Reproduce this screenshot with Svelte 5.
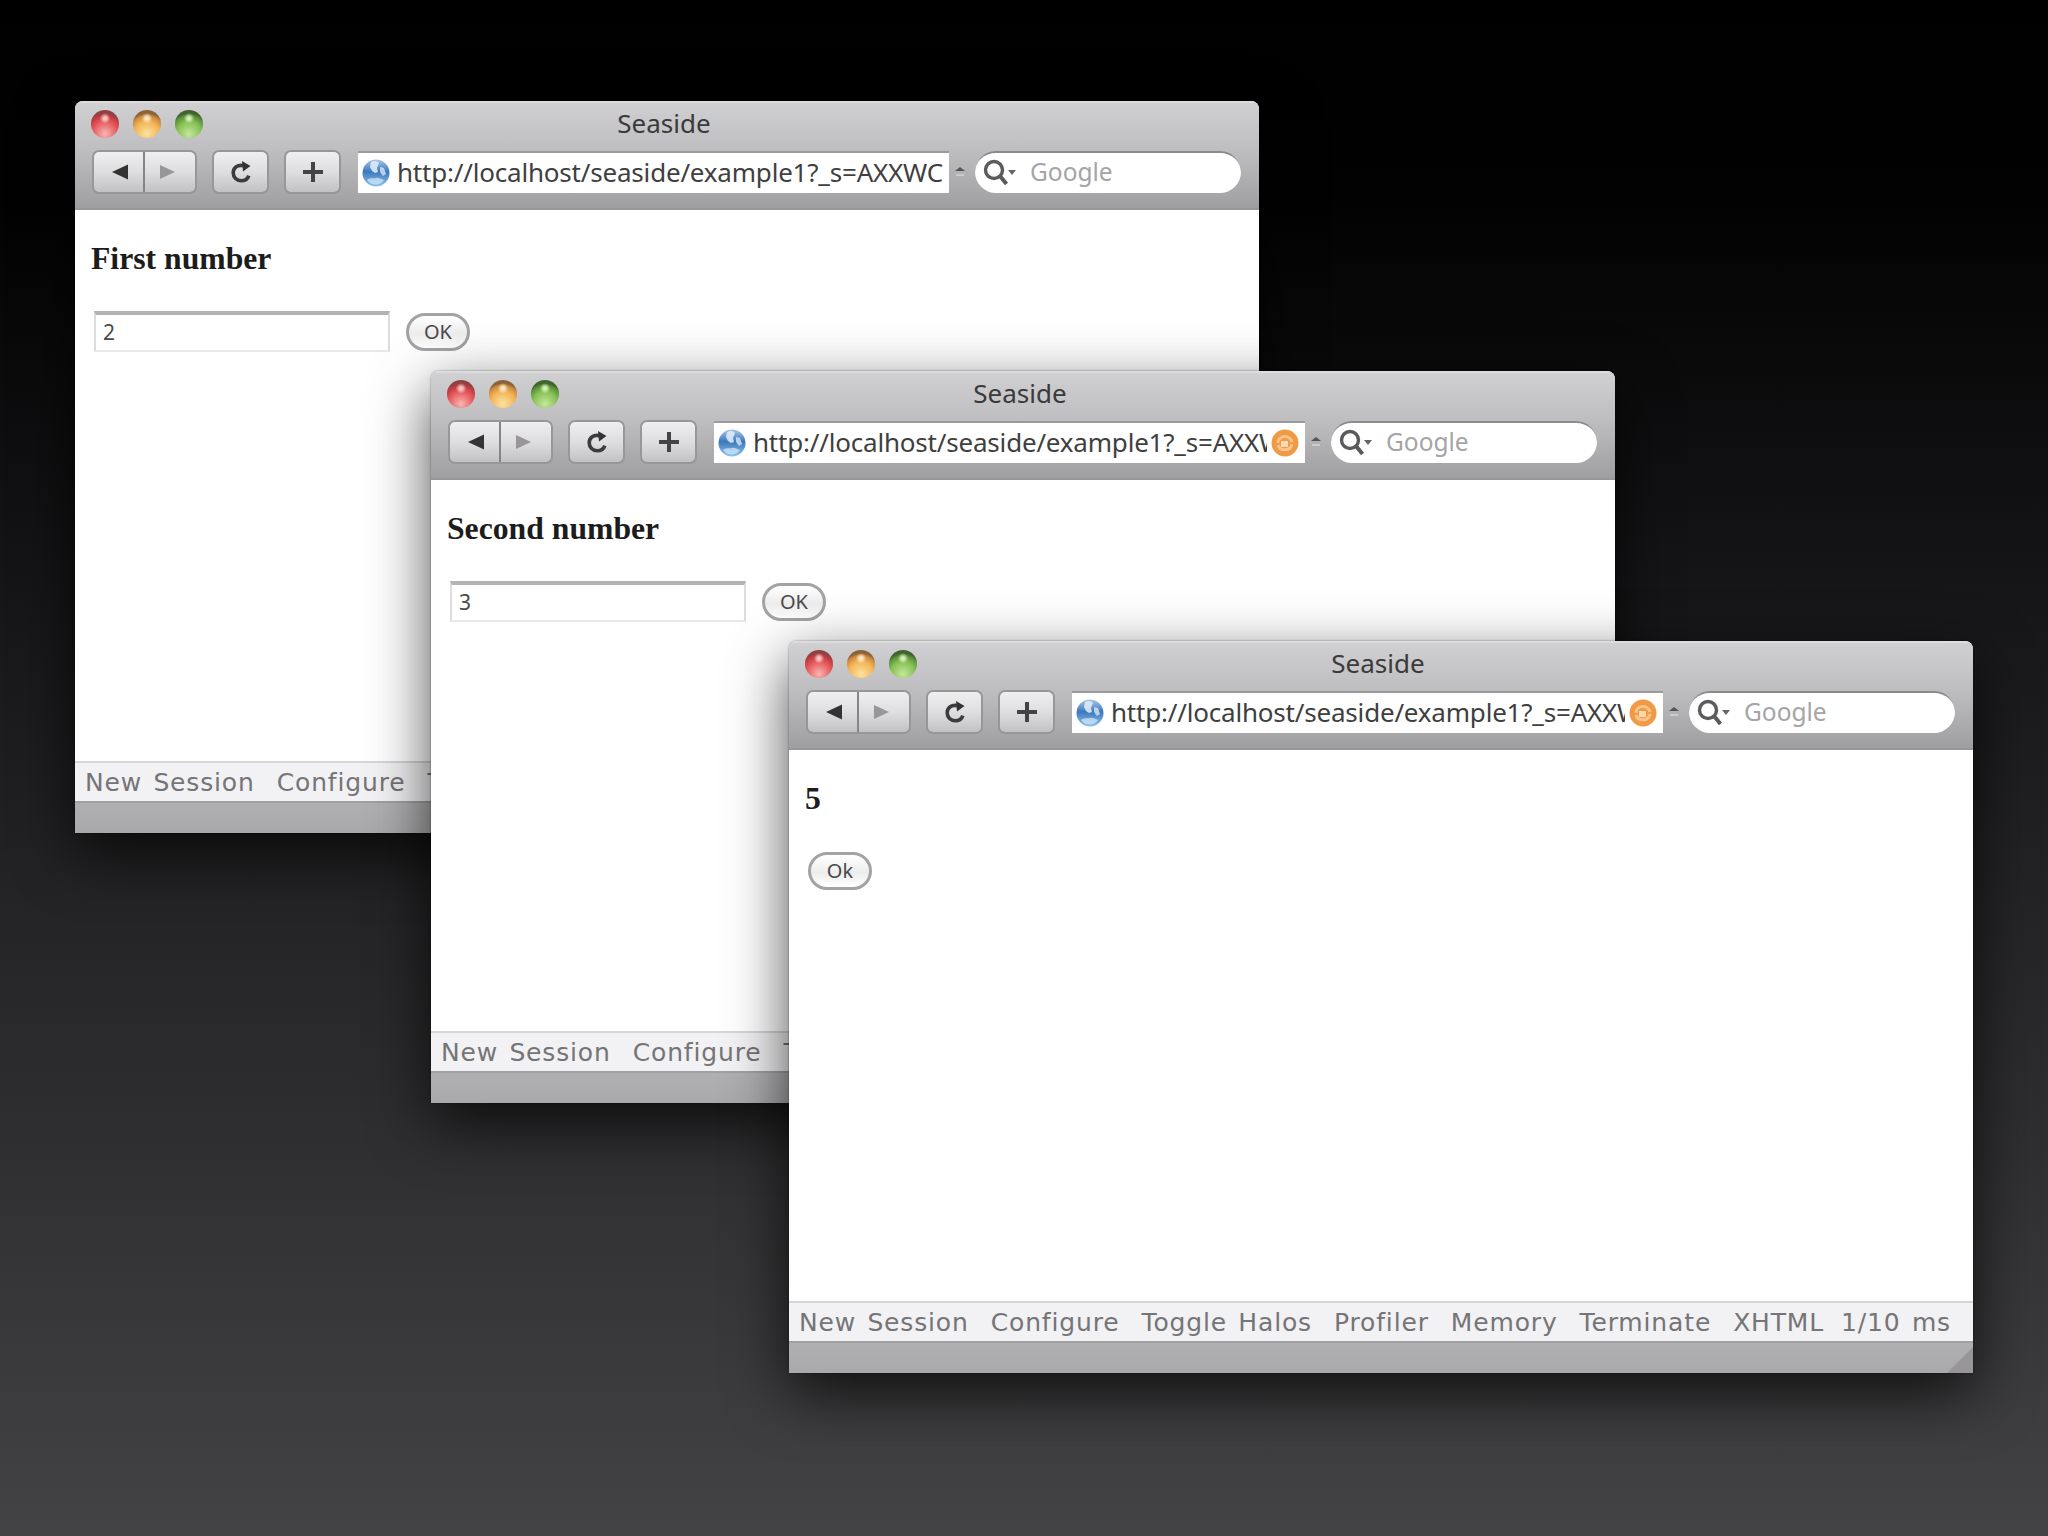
<script>
  const windows = [
    { id: 1, x: 75, y: 101, heading: 'First number', value: '2', button: 'OK', rss: false },
    { id: 2, x: 431, y: 371, heading: 'Second number', value: '3', button: 'OK', rss: true },
    { id: 3, x: 789, y: 641, heading: '5', value: null, button: 'Ok', rss: true }
  ];

  const links = ['New Session', 'Configure', 'Toggle Halos', 'Profiler', 'Memory', 'Terminate', 'XHTML'];
  const lights = ['red', 'yellow', 'green'];
  const url = 'http://localhost/seaside/example1?_s=AXXWC';
</script>

<main class="desktop">
  {#each windows as win (win.id)}
    <section class="window" style="left: {win.x}px; top: {win.y}px">
      <header>
        <div class="titlebar">
          <div class="lights">
            {#each lights as light}
              <span class="light {light}"></span>
            {/each}
          </div>
          <div class="title">Seaside</div>
        </div>

        <div class="toolbar">
          <div class="btn nav">
            <span>
              <svg width="18" height="18" viewBox="0 0 18 18"><path d="M1 9 17 1.5v15z" fill="#333" /></svg>
            </span>
            <span>
              <svg width="18" height="18" viewBox="0 0 18 18"><path d="M16 9 1 2v14z" fill="#999699" /></svg>
            </span>
          </div>
          <div class="btn">
            <svg width="24" height="26" viewBox="0 0 24 26">
              <path d="M15 6.8C8.500 5 4.200 9 4.200 13.800c0 4.600 3.600 8 8 8 3.600 0 6.600-2 7.600-5.200" fill="none" stroke="#3c3c3c" stroke-width="3.600" />
              <path d="M13 2 21.500 7 14 12.500z" fill="#333" />
            </svg>
          </div>
          <div class="btn">
            <svg width="22" height="22" viewBox="0 0 22 22">
              <path d="M11 1v20M1 11h20" stroke="#444" stroke-width="4" />
            </svg>
          </div>

          <div class="address">
            <svg class="globe" width="28" height="28" viewBox="0 0 28 28">
              <defs>
                <linearGradient id="globe{win.id}" x1="0" y1="0" x2="0" y2="1">
                  <stop offset="0" stop-color="#a9c8e8" />
                  <stop offset="0.450" stop-color="#3c78bb" />
                  <stop offset="1" stop-color="#8fc3ee" />
                </linearGradient>
              </defs>
              <circle cx="14" cy="14" r="13.500" fill="url(#globe{win.id})" />
              <path d="M9 3c3-2 7-1 8 1l-2 5 1 4-3 1-3-2-2-4z" fill="#e4effa" opacity="0.850" />
              <path d="M18 8l4 1 2 6-3 2-3-4z" fill="#d4e6f7" opacity="0.800" />
              <path d="M5 21c4-3 7-1 9-2s5 1 8 2c-4 6-13 6-17 0z" fill="#d6ebfa" opacity="0.700" />
            </svg>
            <span class="url">{url}</span>
            {#if win.rss}
              <svg class="reload-badge" width="28" height="28" viewBox="0 0 28 28">
                <circle cx="14" cy="14" r="13.500" fill="#f19a45" />
                <path d="M7 14c0-8 12-9 14-1M21 15c-1 7-12 8-14 1" fill="none" stroke="#f9c48a" stroke-width="3" />
                <path d="M10 12h7v6h-7z" fill="#fbd9b0" />
              </svg>
            {/if}
          </div>

          <svg class="snap" width="12" height="12" viewBox="0 0 12 12">
            <path d="M1 5 6 1l5 4" fill="#555" />
            <path d="M2 9h8" stroke="#ccc" stroke-width="2" />
          </svg>

          <div class="search">
            <svg width="36" height="28" viewBox="0 0 36 28">
              <circle cx="11" cy="11" r="8.500" fill="none" stroke="#5c5a5c" stroke-width="3.400" />
              <path d="M17 17 23.500 25" stroke="#5c5a5c" stroke-width="4" />
              <path d="M25 11h8l-4 5z" fill="#666" />
            </svg>
            <span>Google</span>
          </div>
        </div>
      </header>

      <div class="page">
        <h3>{win.heading}</h3>
        <div class="form">
          {#if win.value}
            <div class="field">{win.value}</div>
          {/if}
          <div class="ok" class:beside={win.value}>{win.button}</div>
        </div>
      </div>

      <nav>
        {#each links as link}
          <span>{link}</span>
        {/each}
        <span class="time">1/10 ms</span>
      </nav>

      <footer>
        <svg width="28" height="28" viewBox="0 0 28 28">
          <path d="M28 2v26H2z" fill="#979598" />
        </svg>
      </footer>
    </section>
  {/each}
</main>

<style>
  :global(body) {
    margin: 0;
    background: #000;
  }

  .desktop {
    position: relative;
    width: 2048px;
    height: 1536px;
    overflow: hidden;
    background: linear-gradient(180deg, #000 0, #020203 200px, #19181a 660px, #2f2e30 1150px, #434244 1536px);
    font-family: 'Noto Sans', 'Open Sans', sans-serif;
  }

  /* windows are placed freely on the desktop */
  .window {
    position: absolute;
    display: flex;
    flex-direction: column;
    box-sizing: border-box;
    width: 1184px;
    height: 732px;
    border-radius: 8px 8px 0 0;
    overflow: hidden;
    background: #fff;
    box-shadow: 0 20px 60px rgba(0, 0, 0, 0.7), 0 0 2px rgba(0, 0, 0, 0.5);
  }

  header {
    display: flex;
    flex-direction: column;
    height: 109px;
    box-sizing: border-box;
    border-top: 2px solid #dddcdd;
    border-bottom: 2px solid #979698;
    background: linear-gradient(#d0cfd1, #bebdbf 45%, #9f9ea0);
  }

  .titlebar {
    display: grid;
    grid-template-columns: 160px 1fr 166px;
    align-items: center;
    height: 41px;
  }

  .lights {
    display: flex;
    gap: 14px;
    padding-left: 16px;
  }

  .light {
    width: 28px;
    height: 28px;
    border-radius: 50%;
  }

  .red {
    background: radial-gradient(circle at 50% 30%, #f9c5c5 0, #f9c5c5 6%, transparent 22%),
      radial-gradient(circle at 50% 85%, #f9b6b4 0, #e5595c 45%, #c23c41 65%, #8e4143 75%);
  }

  .yellow {
    background: radial-gradient(circle at 50% 30%, #fde6c2 0, #fde6c2 6%, transparent 22%),
      radial-gradient(circle at 50% 85%, #fbe39f 0, #f3b458 45%, #cf8c41 65%, #8b6339 75%);
  }

  .green {
    background: radial-gradient(circle at 50% 30%, #d4edbc 0, #d4edbc 6%, transparent 22%),
      radial-gradient(circle at 50% 85%, #c3e89b 0, #86bf53 45%, #5c923a 65%, #3f632e 75%);
  }

  .title {
    text-align: center;
    font-size: 26px;
    line-height: 32px;
    margin-top: -1px;
    color: #3a3a3b;
  }

  .toolbar {
    display: flex;
    align-items: center;
    height: 55px;
    padding: 0 17px;
  }

  .btn {
    display: flex;
    align-items: center;
    justify-content: center;
    box-sizing: border-box;
    width: 57px;
    height: 44px;
    margin-right: 15px;
    border: 2px solid #979698;
    border-radius: 7px;
    background: linear-gradient(#f0eff0, #dedddf 50%, #c2c1c3);
  }

  .nav {
    width: 105px;
  }

  .nav span {
    display: flex;
    flex: 1;
    align-items: center;
    justify-content: center;
    height: 100%;
  }

  .nav span + span {
    border-left: 2px solid #858486;
    padding-right: 4px;
  }

  .nav span:first-child {
    padding-left: 3px;
  }

  .address {
    display: flex;
    align-items: center;
    box-sizing: border-box;
    width: 591px;
    height: 42px;
    margin-left: 2px;
    padding: 0 4px;
    border-top: 2px solid #9a999b;
    background: #fff;
  }

  .address svg {
    flex-shrink: 0;
  }

  .url {
    flex: 1;
    min-width: 0;
    margin-left: 7px;
    overflow: hidden;
    white-space: nowrap;
    font-size: 26px;
    line-height: 34px;
    letter-spacing: -0.2px;
    padding-bottom: 2px;
    color: #403f40;
  }

  .reload-badge {
    margin: 0 2px 0 4px;
  }

  .snap {
    margin: 0 9px 0 5px;
  }

  .search {
    display: flex;
    align-items: center;
    gap: 11px;
    box-sizing: border-box;
    width: 266px;
    height: 42px;
    padding-left: 8px;
    border-top: 2px solid #8b8a8c;
    border-radius: 21px;
    background: #fff;
    font-size: 24.5px;
    line-height: 34px;
    color: #a5a4a6;
  }

  .search span {
    padding-bottom: 2px;
  }

  .page {
    flex: 1;
    padding: 31px 16px 0;
  }

  h3 {
    margin: 0;
    font-family: 'Liberation Serif', serif;
    font-size: 31.7px;
    line-height: 36px;
    color: #1c1c1c;
  }

  .form {
    display: flex;
    align-items: center;
    gap: 16px;
    height: 42px;
    margin: 33px 0 0 3px;
  }

  .field {
    box-sizing: border-box;
    width: 296px;
    height: 41px;
    padding: 0 7px;
    border: 2px solid #dddcde;
    border-top: 4px solid #b3b2b4;
    border-bottom-color: #e9e8ea;
    font-size: 21px;
    line-height: 35px;
    color: #4a494b;
  }

  .ok {
    box-sizing: border-box;
    width: 64px;
    height: 38px;
    border: 3px solid #a3a2a4;
    border-radius: 19px;
    background: linear-gradient(#fff, #ededee 55%, #fff);
    font-size: 20px;
    line-height: 31px;
    text-align: center;
    color: #4a494b;
  }

  .beside {
    margin-top: 2px;
  }

  nav {
    display: flex;
    gap: 22px;
    box-sizing: border-box;
    height: 40px;
    padding-left: 10px;
    border-top: 2px solid #d6d5d7;
    background: #f2f1f3;
    font-family: 'DejaVu Sans', sans-serif;
    font-size: 25px;
    line-height: 39px;
    letter-spacing: 0.85px;
    word-spacing: 2.5px;
    white-space: nowrap;
    color: #757477;
  }

  .time {
    margin-left: -5px;
  }

  footer {
    display: flex;
    align-items: flex-end;
    justify-content: flex-end;
    box-sizing: border-box;
    height: 32px;
    border-top: 2px solid #a09fa1;
    background: linear-gradient(#b0afb1, #a9a8aa);
  }
</style>
